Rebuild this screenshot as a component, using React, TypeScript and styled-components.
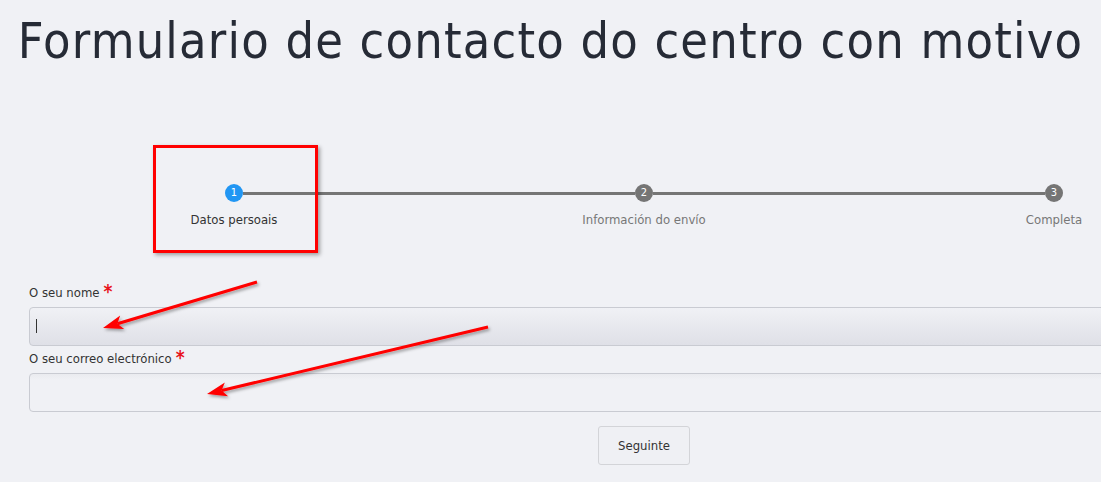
import styled, { createGlobalStyle } from 'styled-components'

const GlobalStyle = createGlobalStyle`
  html, body {
    margin: 0;
    padding: 0;
    background: #f0f1f5;
    overflow: hidden;
  }
  body {
    font-family: 'DejaVu Sans Condensed', 'DejaVu Sans', sans-serif;
    color: #333;
  }
`

const Page = styled.div`
  position: relative;
  width: 1101px;
  height: 482px;
  overflow: hidden;
`

const Title = styled.h1`
  margin: 11px 0 0;
  font-size: 50px;
  line-height: 60px;
  letter-spacing: 1.2px;
  font-weight: 400;
  color: #262b36;
  text-align: center;
  white-space: nowrap;
`

const Content = styled.div`
  width: 1230px;
  margin: 0 0 0 29px;
`

const Stepper = styled.div`
  margin-top: 113px;
`

const DotRow = styled.div`
  display: flex;
  align-items: center;
  padding: 0 196px;
`

const Dot = styled.div<{ $active?: boolean }>`
  width: 18px;
  height: 18px;
  border-radius: 50%;
  background: ${p => (p.$active ? '#2196f3' : '#757575')};
  color: #fff;
  font-size: 11px;
  line-height: 18px;
  text-align: center;
  flex: none;
`

const Connector = styled.div`
  flex: 1;
  height: 3px;
  background: #757575;
`

const LabelRow = styled.div`
  display: grid;
  grid-template-columns: repeat(3, 1fr);
  margin-top: 10px;
`

const StepLabel = styled.div<{ $active?: boolean }>`
  text-align: center;
  font-size: 13px;
  line-height: 16px;
  color: ${p => (p.$active ? '#333' : '#777')};
  font-weight: ${p => (p.$active ? 500 : 400)};
`

const Form = styled.div`
  margin-top: 57px;
  display: flex;
  flex-direction: column;
`

const FieldLabel = styled.label`
  display: block;
  font-size: 13px;
  line-height: 16px;
  color: #333;
  margin-bottom: 6px;

  span {
    color: #e8141c;
    font-size: 19px;
    font-weight: 700;
    margin-left: 4px;
    line-height: 0;
    vertical-align: -1px;
  }
`

const Input = styled.input<{ $focused?: boolean }>`
  box-sizing: border-box;
  width: 100%;
  height: 39px;
  margin: 0 0 5px;
  border: 1px solid #c9cbd2;
  border-radius: 4px;
  padding: 0 6px;
  font: inherit;
  font-size: 14px;
  color: #333;
  outline: none;
  background: ${p =>
    p.$focused
      ? 'linear-gradient(#f0f1f5, #dfe0e7)'
      : 'linear-gradient(#eaebef, #f0f1f5 6px)'};
`

const Caret = styled.div`
  width: 1px;
  height: 14px;
  background: #333;
`

const NameField = styled.div`
  position: relative;

  ${Caret} {
    position: absolute;
    left: 7px;
    top: 12px;
  }
`

const ButtonRow = styled.div`
  display: flex;
  justify-content: center;
  margin-top: 9px;
`

const Button = styled.button`
  width: 92px;
  height: 39px;
  background: #eff0f4;
  border: 1px solid #d3d4d8;
  border-radius: 3px;
  font: inherit;
  font-size: 13px;
  color: #333;
`

const Highlight = styled.div`
  position: absolute;
  left: 153px;
  top: 145px;
  width: 159px;
  height: 102px;
  border: 3px solid #ff0000;
  box-shadow: 2px 2px 4px rgba(0, 0, 0, 0.35);
`

const Arrows = styled.svg`
  position: absolute;
  left: 0;
  top: 0;
  pointer-events: none;
`

const Arrow = ({ x1, y1, x2, y2 }: { x1: number; y1: number; x2: number; y2: number }) => {
  const a = Math.atan2(y2 - y1, x2 - x1)
  const len = 20
  const w = 7
  const bx = x2 - Math.cos(a) * len
  const by = y2 - Math.sin(a) * len
  const px = -Math.sin(a) * w
  const py = Math.cos(a) * w
  const nx = bx + Math.cos(a) * 5
  const ny = by + Math.sin(a) * 5
  const head = `${x2},${y2} ${bx + px},${by + py} ${nx},${ny} ${bx - px},${by - py}`
  return (
    <g filter='url(#shadow)'>
      <line x1={x1} y1={y1} x2={nx} y2={ny} stroke='#ff0000' strokeWidth={3} />
      <polygon points={head} fill='#ff0000' />
    </g>
  )
}

export default function App() {
  return (
    <Page>
      <GlobalStyle />
      <Title>Formulario de contacto do centro con motivo</Title>
      <Content>
        <Stepper>
          <DotRow>
            <Dot $active>1</Dot>
            <Connector />
            <Dot>2</Dot>
            <Connector />
            <Dot>3</Dot>
          </DotRow>
          <LabelRow>
            <StepLabel $active>Datos persoais</StepLabel>
            <StepLabel>Información do envío</StepLabel>
            <StepLabel>Completa</StepLabel>
          </LabelRow>
        </Stepper>
        <Form>
          <FieldLabel htmlFor='nome'>
            O seu nome<span>*</span>
          </FieldLabel>
          <NameField>
            <Input id='nome' $focused />
            <Caret />
          </NameField>
          <FieldLabel htmlFor='correo'>
            O seu correo electrónico<span>*</span>
          </FieldLabel>
          <Input id='correo' />
          <ButtonRow>
            <Button>Seguinte</Button>
          </ButtonRow>
        </Form>
      </Content>
      <Highlight />
      <Arrows width='1101' height='482'>
        <defs>
          <filter id='shadow' x='-20%' y='-20%' width='140%' height='160%'>
            <feDropShadow dx='1.5' dy='2' stdDeviation='1.5' floodColor='#000' floodOpacity='0.35' />
          </filter>
        </defs>
        <Arrow x1={257} y1={282} x2={103} y2={328} />
        <Arrow x1={488} y1={327} x2={207} y2={394} />
      </Arrows>
    </Page>
  )
}
